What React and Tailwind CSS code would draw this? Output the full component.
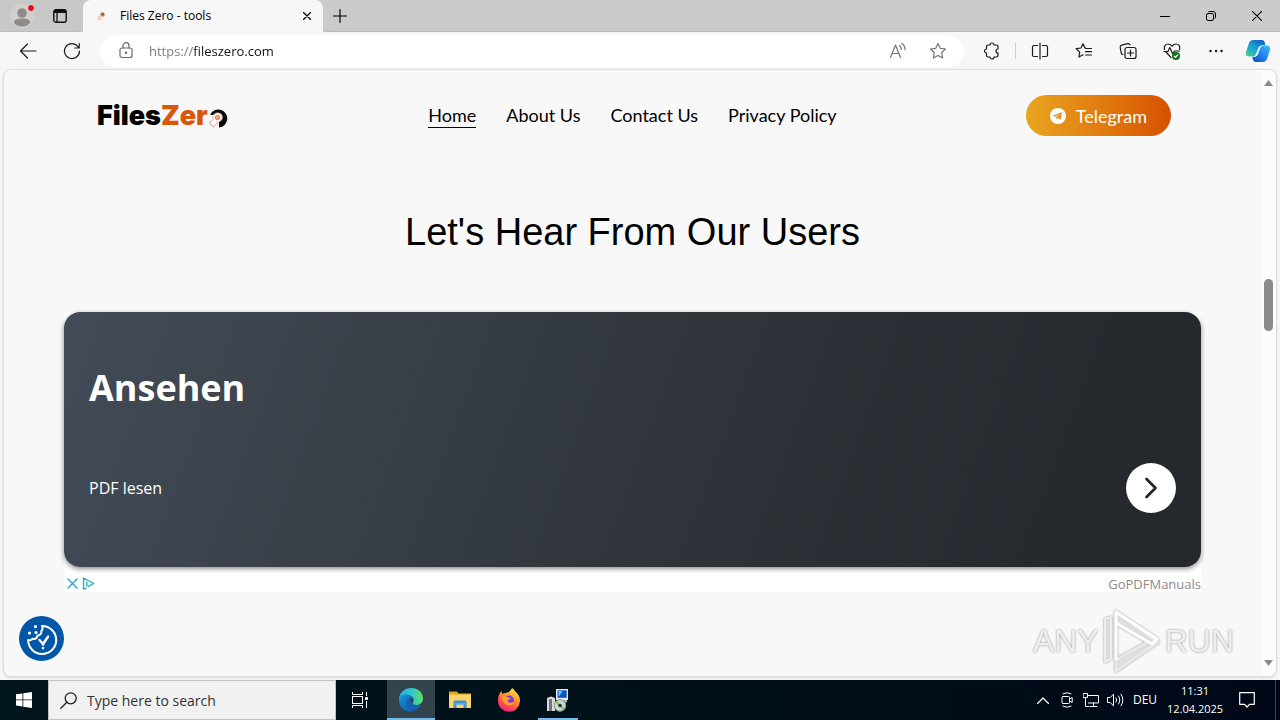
import React, { useState } from 'react'

const NAV_LINKS = ['Home', 'About Us', 'Contact Us', 'Privacy Policy']

const stroke = {
  fill: 'none',
  stroke: 'currentColor',
  strokeLinecap: 'round',
  strokeLinejoin: 'round'
}

function Icon({ size = 18, width = 1.2, children, ...rest }) {
  return (
    <svg width={size} height={size} viewBox="0 0 18 18" {...stroke} strokeWidth={width} aria-hidden="true" {...rest}>
      {children}
    </svg>
  )
}

function ToolButton({ label, children }) {
  return (
    <button type="button" aria-label={label} className="flex h-8 w-10 shrink-0 items-center justify-center text-[#1b1b1b]">
      {children}
    </button>
  )
}

function WindowButton({ label, children }) {
  return (
    <button type="button" aria-label={label} className="flex h-8 w-[46px] items-center justify-center text-black">
      {children}
    </button>
  )
}

function TitleBar() {
  return (
    <div className="flex h-8 bg-[#cbcbcb]">
      <div className="flex w-[83px] shrink-0 items-center rounded-br-md border-b border-[#bdbdbd] bg-[#c8c8c8]">
        <button type="button" aria-label="Profile" className="flex w-[44px] justify-center">
          <svg width="24" height="24" viewBox="0 0 24 24" aria-hidden="true">
            <circle cx="12" cy="12" r="12" fill="#d3cfcc" />
            <circle cx="12" cy="9" r="4.8" fill="#8f8b88" />
            <path d="M4 18.500c0-3 3-4 8-4s8 1 8 4c-1.500 2.800-4.500 4-8 4s-6.500-1.200-8-4z" fill="#8f8b88" />
            <circle cx="21" cy="4" r="3.800" fill="#ddd" />
            <circle cx="21" cy="4" r="2.900" fill="#e00b1c" />
          </svg>
        </button>
        <button type="button" aria-label="Tab actions" className="flex w-8 justify-center">
          <svg width="14" height="14" viewBox="0 0 14 14" aria-hidden="true">
            <rect x=".8" y=".8" width="12.400" height="12.400" rx="2" fill="none" stroke="#111" strokeWidth="1.400" />
            <path d="M1 1h12v3H1z" fill="#111" />
            <path d="M4 4v9" stroke="#111" strokeWidth="1.300" />
          </svg>
        </button>
      </div>
      <div className="flex w-[240px] items-center rounded-t-lg bg-[#f7f7f7] pr-1.5 pl-2.5">
        <svg width="16" height="16" viewBox="0 0 16 16" aria-hidden="true">
          <circle cx="9.500" cy="6.500" r="2.300" fill="#d88a66" />
          <circle cx="9.900" cy="6.300" r="1.200" fill="#6d6463" />
          <path d="M7.500 8L4.500 9.500l1 .5-.6 1.800 1.800-.6.3 1 1.800-2.600" fill="#fbd9c9" stroke="#f2ae90" strokeWidth=".6" />
        </svg>
        <span className="ml-[11px] flex-1 text-xs whitespace-nowrap text-black">Files Zero - tools</span>
        <button type="button" aria-label="Close tab" className="flex h-5 w-5 items-center justify-center">
          <svg width="8" height="8" viewBox="0 0 8 8" {...stroke} strokeWidth="1.300" aria-hidden="true">
            <path d="M.5.5l7 7M7.500.5l-7 7" />
          </svg>
        </button>
      </div>
      <div className="flex flex-1 items-center rounded-bl-md border-b border-[#b9b9b9]">
        <button type="button" aria-label="New tab" className="flex h-8 w-[34px] items-center justify-center">
          <svg width="14" height="14" viewBox="0 0 14 14" {...stroke} strokeWidth="1.200" aria-hidden="true">
            <path d="M7 .5v13M.5 7h13" />
          </svg>
        </button>
        <div className="ml-auto flex">
          <WindowButton label="Minimize">
            <svg width="10" height="10" viewBox="0 0 10 10" {...stroke} aria-hidden="true"><path d="M0 5.500h10" /></svg>
          </WindowButton>
          <WindowButton label="Restore">
            <svg width="10" height="10" viewBox="0 0 10 10" {...stroke} aria-hidden="true">
              <rect x=".5" y="2.500" width="7" height="7" rx="1.500" />
              <path d="M2.500.8q.5-.3 1.200-.3H7q2.500 0 2.500 2.500v3q0 .8-.4 1.300" />
            </svg>
          </WindowButton>
          <WindowButton label="Close">
            <svg width="10" height="10" viewBox="0 0 10 10" {...stroke} strokeWidth="1.100" aria-hidden="true"><path d="M.3.3l9.400 9.400M9.700.3L.3 9.700" /></svg>
          </WindowButton>
        </div>
      </div>
    </div>
  )
}

function Toolbar() {
  const [url, setUrl] = useState('https://fileszero.com')

  return (
    <div className="flex h-[37px] items-center gap-1 bg-[#f7f7f7] pr-1 pl-2">
      <ToolButton label="Back">
        <Icon><path d="M17 9H1.500M8.500 2L1.500 9l7 7" /></Icon>
      </ToolButton>
      <ToolButton label="Refresh">
        <Icon><path d="M16.500 9A7.500 7.500 0 1 1 14.800 4.300L16 5.800M16.200 1.500v4.500h-4.500" /></Icon>
      </ToolButton>
      <div className="ml-1 flex h-8 flex-1 items-center rounded-full bg-white pr-1.5 pl-[17px]">
        <Icon className="text-[#6a6a6a]">
          <rect x="3" y="6" width="12" height="9.500" rx="2" />
          <path d="M6 6V3.700a3 3 0 0 1 6 0V6" />
          <circle cx="9" cy="10.800" r=".6" fill="currentColor" />
        </Icon>
        <input
          type="text"
          aria-label="Address bar"
          value={url}
          onChange={(e) => setUrl(e.target.value)}
          className="ml-3.5 min-w-0 flex-1 bg-[linear-gradient(to_right,#767676_44px,#111111_44px)] bg-clip-text text-[13px] leading-5 text-transparent outline-none"
        />
        <ToolButton label="Read aloud">
          <Icon className="text-[#757575]">
            <path d="M1.500 15.500L6.500 3l5 12.500M3.200 11.500h6.600M10.500 3.500c1.300 1 1.900 2.300 1.900 4M12.800 1.300c2.200 1.600 3.200 3.700 3.200 6.500" />
          </Icon>
        </ToolButton>
        <ToolButton label="Add to favorites">
          <Icon className="text-[#757575]">
            <path d="M9 1.500l2.300 4.800 5.200.7-3.800 3.700.9 5.300L9 13.500 4.400 16l.9-5.300L1.500 7l5.200-.7z" />
          </Icon>
        </ToolButton>
      </div>
      <div className="ml-[3px] flex items-center gap-1">
        <ToolButton label="Extensions">
          <Icon>
            <path d="M6 3h2a2 2 0 0 1 4 0h2.500q1.500 0 1.500 1.500V7a2 2 0 1 0 0 4v2.500q0 1.500-1.500 1.500H12a2 2 0 0 1-4 0H6q-1.500 0-1.500-1.500V11a2 2 0 1 1 0-4V4.500Q4.500 3 6 3z" />
          </Icon>
        </ToolButton>
        <span className="h-4 w-px bg-[#cfcfcf]" />
        <ToolButton label="Split screen">
          <Icon><path d="M9 1v16M6.500 3.500H3q-1.500 0-1.500 1.500v8q0 1.500 1.500 1.500h3.500M11.500 3.500H15q1.500 0 1.500 1.500v8q0 1.500-1.500 1.500h-3.500" /></Icon>
        </ToolButton>
        <ToolButton label="Favorites">
          <Icon><path d="M10.500 6H10L8 1.700 6 6l-4.800.7 3.500 3.400-.8 4.900L8 12.700M10.500 6.500h6M10.500 9.700h6M10.500 13h6" /></Icon>
        </ToolButton>
        <ToolButton label="Collections">
          <Icon>
            <rect x="6" y="5.500" width="11" height="11" rx="2" />
            <path d="M11.500 8v6M8.500 11h6M4 12.500q-1.500-.3-1.800-1.700l-1-5.500q-.3-1.800 1.500-2.200l6-1.500q1.600-.3 2.300 1.200" />
          </Icon>
        </ToolButton>
        <ToolButton label="Browser essentials">
          <Icon>
            <path d="M1.500 7.500C.5 4 3 2 5 2c2 0 3 1 4 2.200C10 3 11 2 13 2c2.500 0 4.600 2 3.500 5.500M3 10l5 5.500M1 9.500h4l1.800-4 3 6.500 1.700-3h5" />
            <circle cx="13" cy="14" r="4" fill="#16701c" stroke="none" />
            <path d="M11.300 14.200l1.200 1.100 2.200-2.400" stroke="#fff" />
          </Icon>
        </ToolButton>
        <ToolButton label="Settings and more">
          <Icon width={2.4}><path d="M3.500 9h.1M9 9h.1M14.500 9h.1" /></Icon>
        </ToolButton>
        <button type="button" aria-label="Copilot" className="flex w-9 justify-center">
          <svg width="26" height="24" viewBox="0 0 26 24" aria-hidden="true">
            <defs>
              <linearGradient id="copilotA" x1="0" y1="1" x2=".7" y2="0">
                <stop offset="0" stopColor="#50cf8c" />
                <stop offset=".5" stopColor="#19a8d5" />
                <stop offset="1" stopColor="#1768c9" />
              </linearGradient>
              <linearGradient id="copilotB" x1="0" y1="1" x2="1" y2="0">
                <stop offset="0" stopColor="#1546c0" />
                <stop offset=".5" stopColor="#2084ee" />
                <stop offset="1" stopColor="#3cc3f5" />
              </linearGradient>
            </defs>
            <path d="M8.500 1H17q2 0 2.600 2l.8 3h-3q-2 0-2.800 2l-2.500 7q-1 2.500-4 2.500H4q-4 0-3-4.500l3-9Q5 1 8.500 1z" fill="url(#copilotA)" />
            <path d="M17.500 23H11q-2.500 0-3-2l-.7-3h1.800q2 0 2.900-2l2.400-7q1-2.500 4-2.500h3.600q4 0 3 4.500l-3 9Q21 23 17.500 23z" fill="url(#copilotB)" />
            <path d="M14 7.500h2.700q-1.200.6-1.700 2l-2 5.500q-.8 2.500-3 2.500H8.800q1.500-.5 2.200-2.500z" fill="#f4fbff" />
          </svg>
        </button>
      </div>
    </div>
  )
}

function SiteHeader() {
  return (
    <header className="grid grid-cols-[1fr_auto_1fr] items-center px-[90px] pt-[25px] font-['Lato',sans-serif]">
      <a href="#home" aria-label="FilesZero" className="flex items-center pl-[3px] font-['Inter',sans-serif] text-[27px] leading-8 font-black text-black">
        Files<span className="text-[#d85708]">Zer</span>
        <svg width="20" height="20" viewBox="0 0 20 20" aria-hidden="true" className="mt-1">
          <path d="M2 7A9 9 0 1 1 11 19.500V13a4 4 0 1 0-4-6z" fill="#0b0b0b" />
          <circle cx="9.500" cy="9.500" r="4.600" fill="#fff" stroke="#f4a98a" strokeWidth=".8" />
          <circle cx="9.500" cy="9.500" r="2.500" fill="#e5763b" />
          <circle cx="9.500" cy="9.500" r="1.100" fill="#fde4d8" />
          <path d="M5.500 11.500L1 14.500l2 .8-.3 2 2-.3.8 2.300 4-5" fill="#fff" stroke="#e5927a" strokeWidth=".8" />
        </svg>
      </a>
      <nav className="flex gap-[30px] text-[18px] leading-6 text-black">
        {NAV_LINKS.map((link, i) => (
          <a key={link} href="#home" className={i === 0 ? 'border-b border-black' : 'border-b border-transparent'}>
            {link}
          </a>
        ))}
      </nav>
      <a
        href="#telegram"
        className="flex h-[41px] items-center gap-2.5 justify-self-end rounded-full bg-linear-to-r from-[#e9a51f] to-[#d65000] px-6 text-[18px] leading-6 text-white"
      >
        <svg width="16" height="16" viewBox="0 0 16 16" aria-hidden="true">
          <circle cx="8" cy="8" r="8" fill="#fff" />
          <path d="M2.800 7.800l9.200-3.700-1.500 8-2.700-2-1.400 1.300-.2-2.300 4-3.500-5 3.100z" fill="#e1941d" />
        </svg>
        Telegram
      </a>
    </header>
  )
}

function AdCard() {
  return (
    <section className="mt-14 bg-white">
      <a
        href="#ad"
        className="flex flex-col gap-[50px] rounded-2xl bg-[linear-gradient(110deg,#424b57_0%,#3a4149_25%,#2f343a_55%,#25282d_90%)] px-[25px] pt-[51px] pb-[54px] font-['Open_Sans',sans-serif] text-white shadow-[0_2px_5px_rgba(0,0,0,0.45)]"
      >
        <h3 className="text-[36px] leading-[50px] font-bold">Ansehen</h3>
        <div className="flex items-center justify-between">
          <span className="text-base">PDF lesen</span>
          <span className="flex h-[50px] w-[50px] items-center justify-center rounded-full bg-white">
            <svg width="14" height="22" viewBox="0 0 14 22" fill="none" stroke="#24272c" strokeWidth="2.800" strokeLinecap="round" strokeLinejoin="round" aria-hidden="true">
              <path d="M2.500 2l9 9-9 9" />
            </svg>
          </span>
        </div>
      </a>
      <div className="flex h-[25px] items-center pt-2 pl-[3px]">
        <button type="button" aria-label="Close ad">
          <svg width="11" height="11" viewBox="0 0 11 11" {...stroke} stroke="#27a5bd" strokeWidth="1.400" aria-hidden="true">
            <path d="M1 1l9 9M10 1l-9 9" />
          </svg>
        </button>
        <a href="#adchoices" aria-label="Ad choices" className="ml-1">
          <svg width="13" height="13" viewBox="0 0 13 13" {...stroke} stroke="#20b0bd" strokeWidth="1.400" aria-hidden="true">
            <path d="M4 11.200l-2.500.8V1l10.300 5.500-5.300 2.900M4.800 5v4" />
          </svg>
        </a>
        <span className="ml-auto font-['Open_Sans',sans-serif] text-[13px] leading-4 text-[#8c8c8c]">GoPDFManuals</span>
      </div>
    </section>
  )
}

function Watermark() {
  return (
    <div className="pointer-events-none absolute right-[42px] bottom-1 flex items-center gap-1 font-['Liberation_Sans',sans-serif] text-[32px] leading-[60px] text-[#eeeeee] drop-shadow-[0_0_1px_rgba(0,0,0,0.4)]">
      <span>ANY</span>
      <svg width="58" height="62" viewBox="0 0 58 62" fill="#f7f7f7" fillOpacity=".6" stroke="#fff" strokeWidth="3" strokeLinejoin="round" aria-hidden="true">
        <path d="M13 2v11l32 19-32 18v11l42-29z" stroke="#e8e8e8" />
        <path d="M13 50V2l41 27-5 5-36-21" fill="none" />
        <path d="M8 7L2 9v43l6-3z" stroke="#eee" strokeWidth="2" />
      </svg>
      <span>RUN</span>
    </div>
  )
}

function ConsentButton() {
  return (
    <button type="button" aria-label="Consent preferences" className="absolute bottom-[15px] left-[15px] flex h-[45px] w-[45px] items-center justify-center rounded-full bg-[#0056a7]">
      <svg width="32" height="32" viewBox="0 0 32 32" {...stroke} stroke="#fff" strokeWidth="2" aria-hidden="true">
        <path d="M16 3a14 14 0 1 1-13.800 14c1.600.6 3.400.2 4.200-1.200 2.500.4 4.600-.7 5-3 2.800-.5 4.400-2.300 3.800-4.600C16.500 7 17 5 16 3z" />
        <path d="M13.500 17l3.600 4 5-7.500" strokeWidth="2.400" />
        <path d="M17 25v.1M17 21v.5" strokeWidth="2.600" />
        <path d="M9.500 3.500v.1M3.500 10v.1M10 9.500v.1" strokeWidth="3.200" />
      </svg>
    </button>
  )
}

function ScrollBar() {
  return (
    <div className="flex w-[15px] shrink-0 flex-col items-center bg-[#fcfcfc] py-2.5" aria-hidden="true">
      <svg width="9" height="6" viewBox="0 0 9 6" fill="#8a8a8a"><path d="M0 6l4.500-6L9 6z" /></svg>
      <span className="mt-[193px] h-[52px] w-[9px] rounded-full bg-[#8b8b8b]" />
      <svg width="9" height="6" viewBox="0 0 9 6" fill="#8a8a8a" className="mt-auto"><path d="M0 0h9L4.500 6z" /></svg>
    </div>
  )
}

function EdgeIcon() {
  return (
    <svg width="26" height="26" viewBox="0 0 26 26" aria-hidden="true">
      <defs>
        <linearGradient id="edgeTop" x1="0" y1=".5" x2="1" y2=".4">
          <stop offset="0" stopColor="#2aa7e5" />
          <stop offset=".55" stopColor="#2fc8c8" />
          <stop offset="1" stopColor="#63e05a" />
        </linearGradient>
        <linearGradient id="edgeLow" x1="0" y1="0" x2="1" y2="1">
          <stop offset="0" stopColor="#1b96de" />
          <stop offset="1" stopColor="#0d4f9f" />
        </linearGradient>
      </defs>
      <path d="M1 12C1.500 5 7 1 13 1c7 0 12 4.500 12 10.500 0 4-3 6.500-6.500 6.500-3 0-4.300-1-3.500-2.300 1.700-2.700.5-6.200-4-6.700C6 8.500 2 10 1 12z" fill="url(#edgeTop)" />
      <path d="M1 13c0-4 4-6 8.500-5.500 3 .4 5 1.700 5.800 3.500C11.500 10 9 12.500 9 15.500c0 4.500 4 7.500 8.500 7.500-1.300 1.200-3 2-5 2C6 25 1 19.800 1 13z" fill="url(#edgeLow)" />
      <path d="M9 15.500c0-2.500 1.500-4.800 4-5-.8 1.500-.6 3 .2 4.500 2 3.800 6.300 4.500 10 2.300-1.700 4-5 6.200-8.200 6C11.500 23 9 19.500 9 15.500z" fill="#1761b0" />
    </svg>
  )
}

function FolderIcon() {
  return (
    <svg width="22" height="20" viewBox="0 0 22 20" aria-hidden="true">
      <path d="M0 1.500h8l1.500 2H22V18H0z" fill="#e8a317" />
      <path d="M0 4.500h22V18H0z" fill="#fdd467" />
      <path d="M4.500 18v-6q0-1.500 1.500-1.500h10q1.500 0 1.500 1.500v6h-3v-3.500h-7V18z" fill="#3a93d6" />
      <path d="M6 14h10" stroke="#74bbee" strokeWidth="1.200" />
    </svg>
  )
}

function FirefoxIcon() {
  return (
    <svg width="24" height="24" viewBox="0 0 24 24" aria-hidden="true">
      <defs>
        <linearGradient id="foxBody" x1=".8" y1="0" x2=".3" y2="1">
          <stop offset="0" stopColor="#fff04a" />
          <stop offset=".35" stopColor="#ffa42a" />
          <stop offset=".7" stopColor="#ff4f4b" />
          <stop offset="1" stopColor="#e5257e" />
        </linearGradient>
      </defs>
      <path d="M15 0c2 1.200 3 3 3.800 4.200 1 .3 4.200 3.500 4.200 8.500A11 11 0 0 1 1 13C1 9 2 5.500 4.500 3l.7 3C6.500 5 7.500 5 8.500 5c1.500-.2 5-1 6.500-5z" fill="url(#foxBody)" />
      <circle cx="12" cy="12.500" r="5" fill="#7a3ce0" />
      <path d="M5 8.500c2-.8 4-.5 5.500.8 1.500.3 3 0 3.300.7.200 1-2.800 1.200-3.100 2.500-.3 1 1 2.500 3 2.200 1.500-.2 2.500-1.200 4-.5-1.500 3-5.700 4.500-9 2.300C6 14.700 4.500 12 5 8.500z" fill="#ff9c2d" />
    </svg>
  )
}

function InstallerIcon() {
  return (
    <svg width="24" height="24" viewBox="0 0 24 24" aria-hidden="true">
      <path d="M10 1h12v11H10z" fill="#e7ebee" />
      <path d="M11.500 2.300h9.200v7.500h-9.200z" fill="#0c55c4" />
      <path d="M12.500 3h4l-3 5h-1z" fill="#5fc6ff" />
      <path d="M13 12h8v2.500h-8z" fill="#a9b2ba" />
      <path d="M1 10l4-1.500 4 1.500v13H1z" fill="#d9d9d9" />
      <path d="M3 11h3v12H3z" fill="#6f777c" />
      <circle cx="14" cy="17.500" r="5.800" fill="#cbd8d2" stroke="#89958f" />
      <path d="M14 17.500l-4-4M14 17.500l4 4" stroke="#86c04c" strokeWidth="2" />
      <circle cx="14" cy="17.500" r="1.800" fill="#173b34" />
    </svg>
  )
}

function TaskItem({ label, active, running, children }) {
  return (
    <button type="button" aria-label={label} className={`flex h-10 w-12 flex-col items-center ${active ? 'bg-[#33444c]' : ''}`}>
      <span className="flex flex-1 items-center">{children}</span>
      {active && <span className="-mt-0.5 h-0.5 w-full bg-[#76b9ed]" />}
      {running && <span className="-mt-0.5 h-0.5 w-10 bg-[#76b9ed]" />}
    </button>
  )
}

function TrayButton({ label, children }) {
  return (
    <button type="button" aria-label={label} className="flex h-10 w-6 items-center justify-center">
      {children}
    </button>
  )
}

function Taskbar() {
  const [query, setQuery] = useState('')

  return (
    <footer className="flex h-10 items-center bg-linear-to-r from-[#00141e] via-[#001019] via-60% to-[#000818] text-white">
      <button type="button" aria-label="Start" className="flex h-10 w-12 items-center justify-center">
        <svg width="16" height="16" viewBox="0 0 16 16" fill="#fff" aria-hidden="true">
          <path d="M0 2.300l6.500-.9v6.100H0zM7.300 1.300L16 0v7.500H7.300zM0 8.300h6.500v6.100L0 13.600zM7.300 8.300H16V16l-8.700-1.300z" />
        </svg>
      </button>
      <label className="flex h-10 w-72 items-center border border-[#c3c3c3] bg-[#f1f1f1] pl-[11px] text-[#222]">
        <svg width="17" height="17" viewBox="0 0 17 17" {...stroke} strokeWidth="1.300" aria-hidden="true">
          <circle cx="10.700" cy="6.300" r="5.500" />
          <path d="M6.800 10.200L.8 16.200" />
        </svg>
        <input
          type="text"
          aria-label="Search"
          placeholder="Type here to search"
          value={query}
          onChange={(e) => setQuery(e.target.value)}
          className="ml-2.5 min-w-0 flex-1 bg-transparent text-[14px] outline-none placeholder:text-[#333]"
        />
      </label>
      <TaskItem label="Task view">
        <svg width="16" height="16" viewBox="0 0 16 16" fill="none" stroke="#fff" aria-hidden="true">
          <path d="M.5 0v2.500h10V0M.5 16v-2.500h10V16M14.500 0v4M14.500 9v7" />
          <rect x=".5" y="4.500" width="10" height="7" />
          <path d="M13.500 5.500h2v2h-2z" fill="#fff" />
        </svg>
      </TaskItem>
      <div className="ml-[3px] flex gap-px">
        <TaskItem label="Microsoft Edge" active><EdgeIcon /></TaskItem>
        <TaskItem label="File Explorer"><FolderIcon /></TaskItem>
        <TaskItem label="Firefox"><FirefoxIcon /></TaskItem>
        <TaskItem label="Installer" running><InstallerIcon /></TaskItem>
      </div>
      <div className="ml-auto flex items-center pr-1">
        <TrayButton label="Show hidden icons">
          <svg width="12" height="7" viewBox="0 0 12 7" {...stroke} strokeWidth="1.200" aria-hidden="true"><path d="M.5 6.500L6 1l5.500 5.500" /></svg>
        </TrayButton>
        <TrayButton label="Meet now">
          <svg width="12" height="16" viewBox="0 0 12 16" {...stroke} aria-hidden="true">
            <rect x="1" y="4.500" width="7.500" height="7" rx="1" />
            <path d="M8.500 7l2.700-1.500v5L8.500 9M2 1.800Q6-.5 10 1.800M2 14.200q4 2.300 8 0" />
          </svg>
        </TrayButton>
        <TrayButton label="Network">
          <svg width="16" height="14" viewBox="0 0 16 14" {...stroke} aria-hidden="true">
            <path d="M5 2.500h10.500v7.500h-10M10.500 10v3M7 13.500h7M.5.500h4v4h-4zM2.500 4.500V13.500h3" />
          </svg>
        </TrayButton>
        <TrayButton label="Volume">
          <svg width="17" height="14" viewBox="0 0 17 14" {...stroke} aria-hidden="true">
            <path d="M.8 4.500h2.400L6.500 1.200v11.600L3.200 9.500H.8zM9 4.800q1.500 2.200 0 4.400M11.500 3q2.800 4 0 8M14 1.200q4 5.800 0 11.600" />
          </svg>
        </TrayButton>
        <button type="button" className="w-9 text-center text-xs">DEU</button>
        <button type="button" className="w-16 text-center text-[11px] leading-[18px] whitespace-nowrap">
          11:31<br />12.04.2025
        </button>
        <button type="button" aria-label="Notifications" className="flex h-10 w-10 items-center justify-center">
          <svg width="16" height="16" viewBox="0 0 16 16" {...stroke} strokeWidth="1.200" aria-hidden="true">
            <path d="M.7.7h14.600v11.600h-4.800L8 15l-2.500-2.700H.7z" />
          </svg>
        </button>
        <span className="ml-2 h-10 w-px bg-[#3d444d]" />
      </div>
    </footer>
  )
}

function App() {
  return (
    <div className="flex min-h-screen flex-col bg-[#f7f7f7] font-['Open_Sans','Noto_Sans',sans-serif]">
      <TitleBar />
      <Toolbar />
      <main className="relative mx-[3px] mb-[3px] flex flex-1 overflow-hidden rounded-lg border border-[#dedede] bg-[#f8f8f8] shadow-sm">
        <div className="min-w-0 flex-1">
          <SiteHeader />
          <div className="px-[60px]">
            <h2 className="mt-[72px] text-center font-['Liberation_Sans',sans-serif] text-[38px] leading-[48px] text-black">
              Let's Hear From Our Users
            </h2>
            <AdCard />
          </div>
        </div>
        <ScrollBar />
        <ConsentButton />
        <Watermark />
      </main>
      <Taskbar />
    </div>
  )
}

export default App
